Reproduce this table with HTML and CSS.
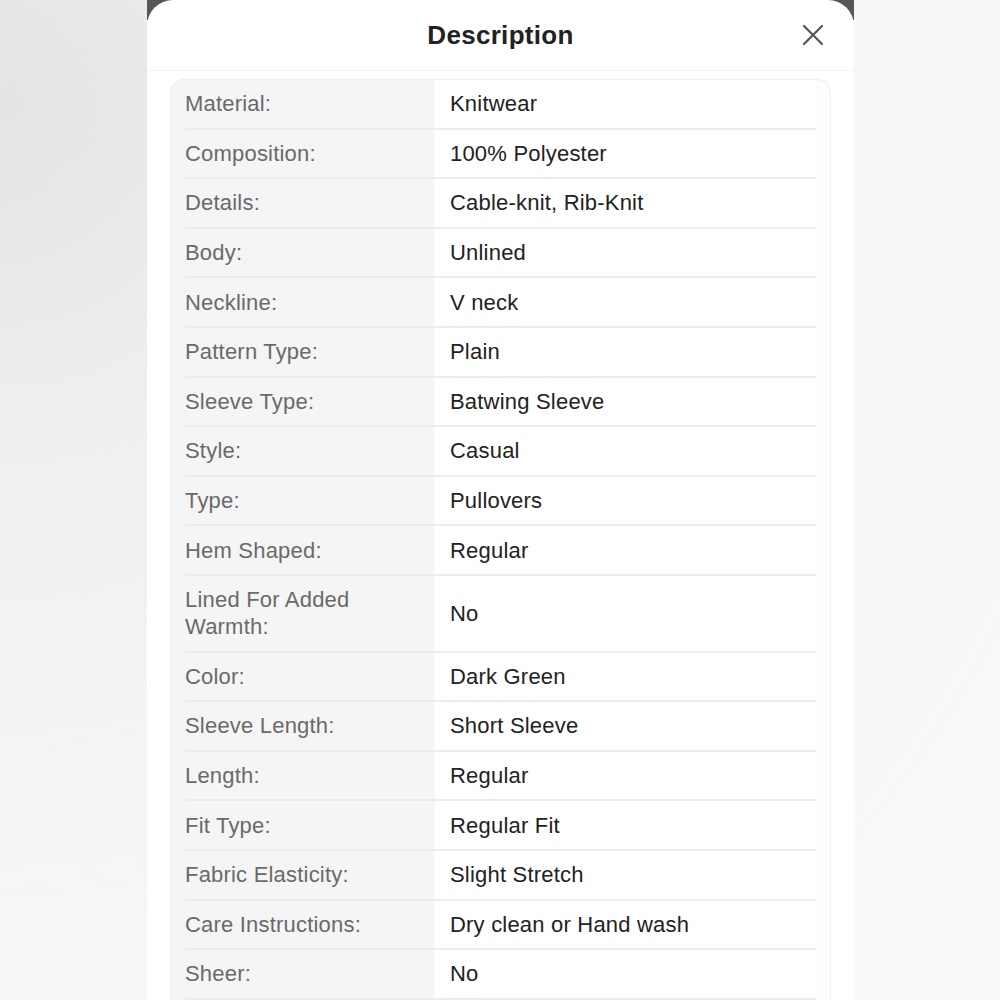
FILE: index.html
```html
<!DOCTYPE html>
<html lang="en">
<head>
  <meta charset="UTF-8">
  <title>Description</title>
  <link rel="stylesheet" href="styles.css">
</head>
<body>

  <div class="sheet-wrap">
    <div class="sheet">
      <div class="sheet-head">
        <span></span>
        <h1>Description</h1>
        <button class="close" aria-label="Close">
          <svg width="22" height="22" viewBox="0 0 22 22"><path d="M2 2 L20 20 M20 2 L2 20" stroke="#555" stroke-width="2.2" stroke-linecap="round" fill="none"/></svg>
        </button>
      </div>

      <div class="spec-card">
        <div class="row"><div class="label">Material:</div><div class="value">Knitwear</div></div>
        <div class="row"><div class="label">Composition:</div><div class="value">100% Polyester</div></div>
        <div class="row"><div class="label">Details:</div><div class="value">Cable-knit, Rib-Knit</div></div>
        <div class="row"><div class="label">Body:</div><div class="value">Unlined</div></div>
        <div class="row"><div class="label">Neckline:</div><div class="value">V neck</div></div>
        <div class="row"><div class="label">Pattern Type:</div><div class="value">Plain</div></div>
        <div class="row"><div class="label">Sleeve Type:</div><div class="value">Batwing Sleeve</div></div>
        <div class="row"><div class="label">Style:</div><div class="value">Casual</div></div>
        <div class="row"><div class="label">Type:</div><div class="value">Pullovers</div></div>
        <div class="row"><div class="label">Hem Shaped:</div><div class="value">Regular</div></div>
        <div class="row"><div class="label">Lined For Added Warmth:</div><div class="value">No</div></div>
        <div class="row"><div class="label">Color:</div><div class="value">Dark Green</div></div>
        <div class="row"><div class="label">Sleeve Length:</div><div class="value">Short Sleeve</div></div>
        <div class="row"><div class="label">Length:</div><div class="value">Regular</div></div>
        <div class="row"><div class="label">Fit Type:</div><div class="value">Regular Fit</div></div>
        <div class="row"><div class="label">Fabric Elasticity:</div><div class="value">Slight Stretch</div></div>
        <div class="row"><div class="label">Care Instructions:</div><div class="value">Dry clean or Hand wash</div></div>
        <div class="row"><div class="label">Sheer:</div><div class="value">No</div></div>
      </div>
    </div>
  </div>

</body>
</html>
```

FILE: styles.css
```css
html, body {
  height: 100%;
}

body {
  margin: 0;
  overflow: hidden;
  font-family: "Liberation Sans", Arial, sans-serif;
  background: radial-gradient(circle at 0 10%, #e4e4e4 0, #efefef 25%, #f6f6f6 60%, #fafafa 100%);
}

.sheet-wrap {
  width: 707px;
  margin-left: 147px;
  height: 1000px;
  background: linear-gradient(#575757 0, #575757 20px, transparent 20px);
}

.sheet {
  height: 100%;
  background: #fff;
  border-radius: 26px 26px 0 0;
}

.sheet-head {
  height: 70px;
  display: grid;
  grid-template-columns: 1fr auto 1fr;
  align-items: center;
  border-bottom: 1px solid #f5f5f5;
}

.sheet-head h1 {
  margin: 0;
  font-size: 26px;
  font-weight: bold;
  color: #222;
  letter-spacing: 0.3px;
}

.close {
  justify-self: end;
  margin-right: 30px;
  padding: 0;
  border: none;
  background: none;
  display: flex;
}

.spec-card {
  margin: 8px 23px 0;
  padding: 0 14px;
  border: 1px solid #efefef;
  border-bottom: none;
  border-radius: 14px 14px 0 0;
  background: linear-gradient(to right, #f5f5f5 0, #f5f5f5 263px, #fdfdfd 263px);
}

.row {
  display: grid;
  grid-template-columns: 250px 1fr;
  border-bottom: 2px solid #ececec;
  font-size: 22px;
  line-height: 27px;
  letter-spacing: 0.2px;
}

.label {
  padding: 10.3px 14px 10.3px 0;
  color: #6a6a6a;
}

.value {
  padding: 10.3px 15px;
  background: #fff;
  color: #222;
  display: flex;
  align-items: center;
}
```
